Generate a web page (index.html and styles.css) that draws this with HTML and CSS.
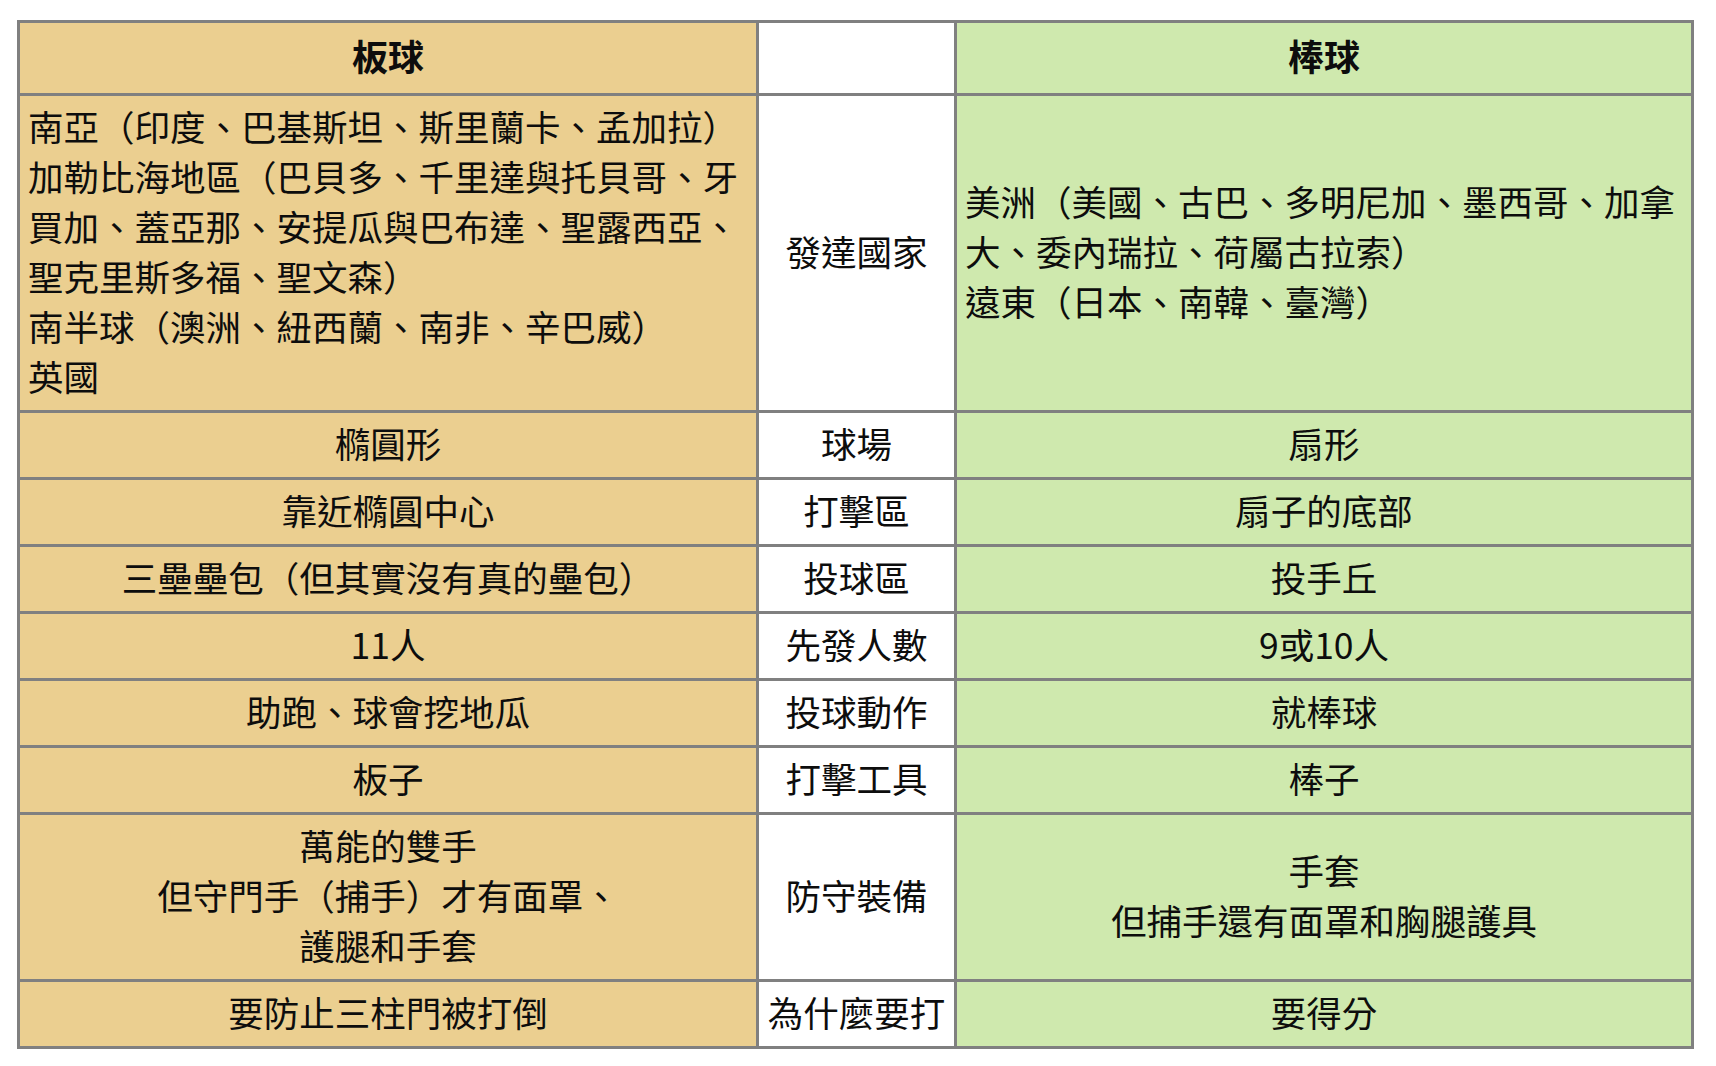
FILE: index.html
```html
<!DOCTYPE html>
<html lang="zh-Hant">
<head>
<meta charset="utf-8">
<title>板球與棒球</title>
<link rel="stylesheet" href="styles.css">
</head>
<body>
<table class="cmp">
  <colgroup>
    <col class="c-cricket">
    <col class="c-label">
    <col class="c-baseball">
  </colgroup>
  <thead>
    <tr>
      <th class="cricket">板球</th>
      <th class="label"></th>
      <th class="baseball">棒球</th>
    </tr>
  </thead>
  <tbody>
    <tr>
      <td class="cricket left">南亞（印度、巴基斯坦、斯里蘭卡、孟加拉）<br>加勒比海地區（巴貝多、千里達與托貝哥、牙<br>買加、蓋亞那、安提瓜與巴布達、聖露西亞、<br>聖克里斯多福、聖文森）<br>南半球（澳洲、紐西蘭、南非、辛巴威）<br>英國</td>
      <td class="label">發達國家</td>
      <td class="baseball left">美洲（美國、古巴、多明尼加、墨西哥、加拿<br>大、委內瑞拉、荷屬古拉索）<br>遠東（日本、南韓、臺灣）</td>
    </tr>
    <tr>
      <td class="cricket">橢圓形</td>
      <td class="label">球場</td>
      <td class="baseball">扇形</td>
    </tr>
    <tr>
      <td class="cricket">靠近橢圓中心</td>
      <td class="label">打擊區</td>
      <td class="baseball">扇子的底部</td>
    </tr>
    <tr>
      <td class="cricket">三壘壘包（但其實沒有真的壘包）</td>
      <td class="label">投球區</td>
      <td class="baseball">投手丘</td>
    </tr>
    <tr>
      <td class="cricket">11人</td>
      <td class="label">先發人數</td>
      <td class="baseball">9或10人</td>
    </tr>
    <tr>
      <td class="cricket">助跑、球會挖地瓜</td>
      <td class="label">投球動作</td>
      <td class="baseball">就棒球</td>
    </tr>
    <tr>
      <td class="cricket">板子</td>
      <td class="label">打擊工具</td>
      <td class="baseball">棒子</td>
    </tr>
    <tr>
      <td class="cricket">萬能的雙手<br>但守門手（捕手）才有面罩、<br>護腿和手套</td>
      <td class="label">防守裝備</td>
      <td class="baseball">手套<br>但捕手還有面罩和胸腿護具</td>
    </tr>
    <tr>
      <td class="cricket">要防止三柱門被打倒</td>
      <td class="label">為什麼要打</td>
      <td class="baseball">要得分</td>
    </tr>
  </tbody>
</table>
</body>
</html>
```

FILE: styles.css
```css
html, body {
  margin: 0;
  padding: 0;
  background: #ffffff;
}

body {
  padding: 20px 0 0 17px;
  font-family: "Noto Sans CJK TC", "Noto Sans CJK SC", "Noto Sans", sans-serif;
  color: #0d0d0d;
}

.cmp {
  border-collapse: collapse;
  table-layout: fixed;
  width: 1674px;
  font-size: 35.5px;
  line-height: 50px;
}

.c-cricket { width: 739px; }
.c-label { width: 198px; }
.c-baseball { width: 737px; }

.cmp th,
.cmp td {
  border: 3px solid #808080;
  padding: 5px 8px 9px;
  text-align: center;
  vertical-align: middle;
  white-space: nowrap;
}

.cmp th {
  font-weight: 700;
  font-size: 36px;
  padding-top: 7px;
  padding-bottom: 13px;
}

.cmp td.label {
  padding-left: 0;
  padding-right: 0;
}

.cmp .left {
  text-align: left;
}

.cricket { background: #ebcf90; }
.baseball { background: #cfe9ae; }
.label { background: #ffffff; }
```
